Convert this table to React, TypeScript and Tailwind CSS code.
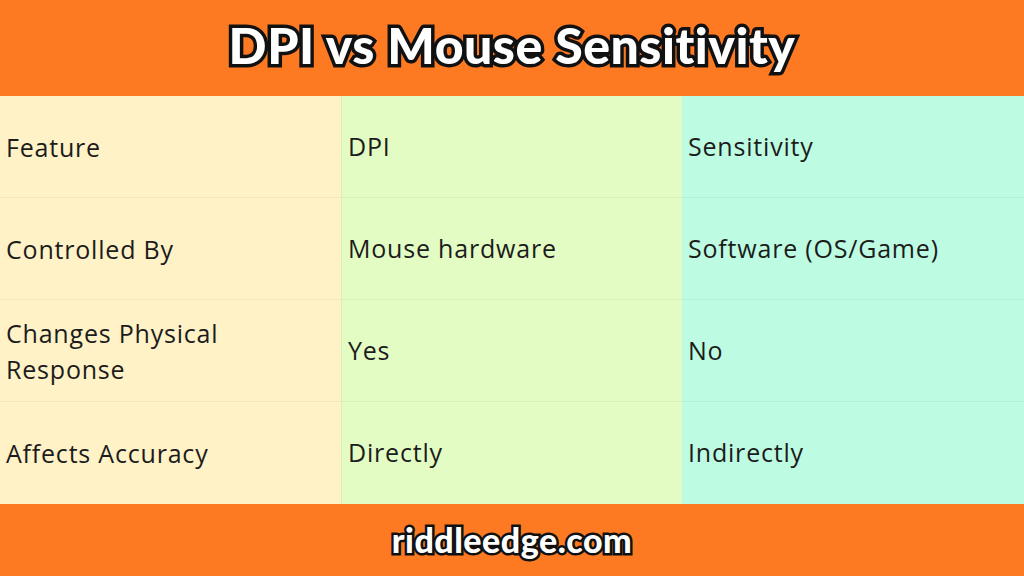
import React from "react";

const rows: { a: string[]; b: string; c: string }[] = [
  { a: ["Feature"], b: "DPI", c: "Sensitivity" },
  { a: ["Controlled By"], b: "Mouse hardware", c: "Software (OS/Game)" },
  { a: ["Changes Physical", "Response"], b: "Yes", c: "No" },
  { a: ["Affects Accuracy"], b: "Directly", c: "Indirectly" },
];

export default function App() {
  return (
    <div className="w-[1024px] h-[576px] flex flex-col bg-[#fe7a22] overflow-hidden">
      <div className="h-[96px] flex items-center justify-center bg-[#fe7a22]">
        <h1 className="font-['Lato',sans-serif] font-black text-[50px] leading-none text-white tracking-[0.5px] [-webkit-text-stroke:7px_#111] [paint-order:stroke_fill] mt-[-6px]">
          DPI vs Mouse Sensitivity
        </h1>
      </div>
      <div className="flex-1 grid grid-cols-[341px_341px_342px] grid-rows-4 font-['Open_Sans',sans-serif] text-[25px] tracking-[0.8px] text-[#1c1c1c]">
        {rows.map((r, i) => (
          <React.Fragment key={i}>
            <div className={`bg-[#fff2c6] flex flex-col justify-center pl-[6px] leading-[36px] border-[#f3e6bb] ${i < 3 ? "border-b" : ""}`}>
              {r.a.map((t) => (
                <span key={t}>{t}</span>
              ))}
            </div>
            <div className={`bg-[#e3fcc3] flex items-center pl-[6px] border-[#d8f0b8] border-l ${i < 3 ? "border-b" : ""}`}>
              {r.b}
            </div>
            <div className={`bg-[#bdfce2] flex items-center pl-[6px] border-[#b0f0d4] ${i < 3 ? "border-b" : ""}`}>
              {r.c}
            </div>
          </React.Fragment>
        ))}
      </div>
      <div className="h-[72px] flex items-center justify-center bg-[#fe7a22]">
        <span className="font-['Lato',sans-serif] font-black text-[34px] leading-none text-white tracking-[0.5px] [-webkit-text-stroke:5px_#111] [paint-order:stroke_fill]">
          riddleedge.com
        </span>
      </div>
    </div>
  );
}
